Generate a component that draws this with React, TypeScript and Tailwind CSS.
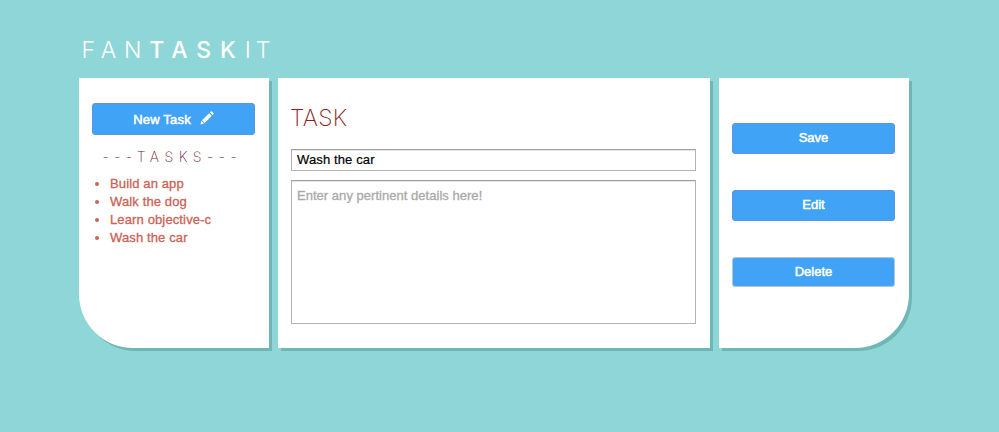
import type { ReactNode } from "react";

const tasks = ["Build an app", "Walk the dog", "Learn objective-c", "Wash the car"];

function Panel({ className, children }: { className: string; children: ReactNode }) {
  return (
    <section className={`h-[270px] bg-white shadow-[3px_3px_0_#6fb7b7] ${className}`}>{children}</section>
  );
}

function Button({ className, children }: { className: string; children: ReactNode }) {
  return (
    <button
      className={`flex w-[163px] items-center justify-center rounded-[3px] border bg-[#40a3f5] text-[13px] leading-4 text-white [-webkit-text-stroke:0.5px_white] ${className}`}
    >
      {children}
    </button>
  );
}

function Pencil() {
  return (
    <svg className="mb-[3px] ml-[9px] h-[14px] w-[14px]" viewBox="0 0 14 14" fill="white">
      <path d="M0.5 13.5 1.4 10 4 12.6Z" />
      <path d="M2 9.2 9.2 2.2 11.8 4.8 4.7 12Z" />
      <path d="M9.9 1.5 10.8 .6Q11.4 .1 12 .6L13.4 2Q13.9 2.6 13.4 3.2L12.5 4.1Z" />
    </svg>
  );
}

export default function App() {
  return (
    <div className="h-[432px] w-[999px] overflow-hidden bg-[#8ed6d7] pl-[79px] pt-[35px] font-['Liberation_Sans',Arial,sans-serif]">
      <h1 className="h-[43px] pl-[2.5px] font-['Inter',sans-serif] text-[23px] font-light leading-[31px] tracking-[7.8px] text-white">
        FAN<span className="font-[550] tracking-[8.9px]">TASK</span><span className="tracking-[5px]">IT</span>
      </h1>
      <main className="flex gap-[9px]">
        <Panel className="w-[190px] rounded-bl-[54px] px-[13px] pt-[25px]">
          <Button className="h-8 border-[#5b94e0] pt-px tracking-[0.2px]">
            New Task
            <Pencil />
          </Button>
          <h2 className="mt-[13px] whitespace-nowrap pl-[10.5px] font-['Inter',sans-serif] text-[14px] font-extralight leading-[18px] tracking-[5.5px] text-[#6b1d35]">
            ---TASKS---
          </h2>
          <ul className="mt-[9px] list-disc pl-[18px] text-[13px] leading-[18px] tracking-[0.13px] text-[#cb6255] [-webkit-text-stroke:0.3px_#cb6255]">
            {tasks.map((task) => (
              <li key={task}>{task}</li>
            ))}
          </ul>
        </Panel>
        <Panel className="w-[432px] px-[13px] pt-[26px]">
          <h2 className="-ml-px h-[45px] font-['Inter',sans-serif] text-[23px] font-extralight leading-[28px] tracking-[0.3px] text-[#8f1d1d]">
            TASK
          </h2>
          <input
            className="block h-[22px] w-[405px] border border-[#b4b4b4] border-t-[#a0a0a0] px-[5px] pb-[2px] text-[13px] tracking-[0.13px] text-black shadow-[inset_0_1px_0_#e6e6e6] outline-none [-webkit-text-stroke:0.2px_black]"
            defaultValue="Wash the car"
          />
          <textarea
            className="mt-[9px] block h-[144px] w-[405px] resize-none border border-[#b4b4b4] border-t-[#a0a0a0] px-[5px] pt-[6px] text-[13px] leading-[18px] tracking-[0.03px] shadow-[inset_0_1px_0_#e6e6e6] outline-none placeholder:text-[#a9a9a9] placeholder:[-webkit-text-stroke:0.3px_#a9a9a9]"
            placeholder="Enter any pertinent details here!"
          />
        </Panel>
        <Panel className="w-[190px] rounded-br-[54px] px-[13px] pt-[45px]">
          <Button className="h-[31px] border-[#5b94e0] pb-px">Save</Button>
          <Button className="mt-9 h-[31px] border-[#5b94e0] pb-px">Edit</Button>
          <Button className="mt-9 h-[30px] border-[#b9c6d2]">Delete</Button>
        </Panel>
      </main>
    </div>
  );
}
